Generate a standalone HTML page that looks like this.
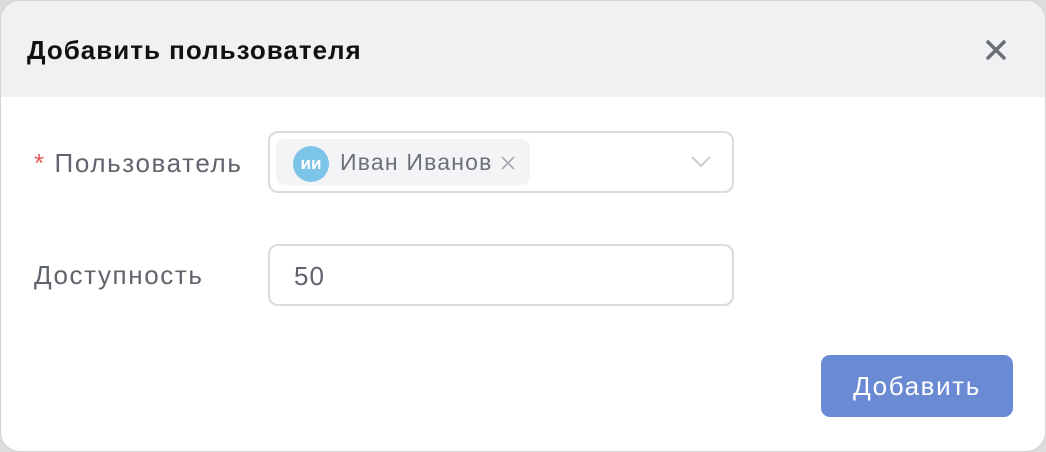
<!DOCTYPE html>
<html><head><meta charset="utf-8"><style>
html,body{margin:0;padding:0;width:1046px;height:452px;overflow:hidden;background:#dcdcdc;font-family:"Liberation Sans","DejaVu Sans",sans-serif}
.d{position:absolute;left:0;top:0;width:1044px;height:450px;border:1px solid #d4d4d4;border-radius:20px;background:#fff;overflow:hidden}
.h{height:96px;background:#f0f1f3;position:relative}
.h .t{position:absolute;left:26px;top:34px;font-size:26px;letter-spacing:1px;font-weight:bold;color:#111}
.x{position:absolute;left:984px;top:38px}
.lbl{position:absolute;font-size:26px;letter-spacing:1.6px;color:#60646c}
.inp{position:absolute;left:267px;width:466px;height:62px;border:2px solid #d9dbdf;border-radius:10px;box-sizing:border-box}
.tag{position:absolute;left:6px;top:6px;width:254px;height:46px;background:#f3f4f6;border-radius:8px}
.av{position:absolute;left:17px;top:7px;width:36px;height:36px;border-radius:50%;background:#7cc4e8;color:#fff;font-weight:bold;font-size:17px;text-align:center;line-height:36px}
.btn{position:absolute;left:820px;top:354px;width:192px;height:62px;border-radius:9px;background:#6a8ad4;color:#fff;font-size:26px;letter-spacing:1.6px;text-align:center;line-height:62px}
</style></head><body>
<div class="d">
<div class="h"><div class="t">Добавить пользователя</div>
<svg class="x" width="22" height="22" viewBox="0 0 22 22"><path d="M3 3L19 19M19 3L3 19" stroke="#6b6e74" stroke-width="3.5" stroke-linecap="round"/></svg></div>
<div class="lbl" style="left:33px;top:147px"><span style="color:#e05a5a">*</span> Пользователь</div>
<div class="inp" style="top:130px">
<div class="tag"><div class="av">ии</div><div style="position:absolute;left:64px;top:10px;font-size:23px;letter-spacing:1.2px;color:#6d7079">Иван Иванов</div>
<svg style="position:absolute;left:224px;top:16px" width="16" height="16" viewBox="0 0 16 16"><path d="M2 2L14 14M14 2L2 14" stroke="#a5a7ac" stroke-width="1.6"/></svg></div>
<svg style="position:absolute;left:420px;top:22px" width="22" height="14" viewBox="0 0 22 14"><path d="M2 2L11 11L20 2" stroke="#c9cbcf" stroke-width="2" fill="none"/></svg>
</div>
<div class="lbl" style="left:33px;top:259px">Доступность</div>
<div class="inp" style="top:243px"><div style="position:absolute;left:24px;top:15px;font-size:26px;letter-spacing:1px;color:#5f636b">50</div></div>
<div class="btn">Добавить</div>
</div>
</body></html>
